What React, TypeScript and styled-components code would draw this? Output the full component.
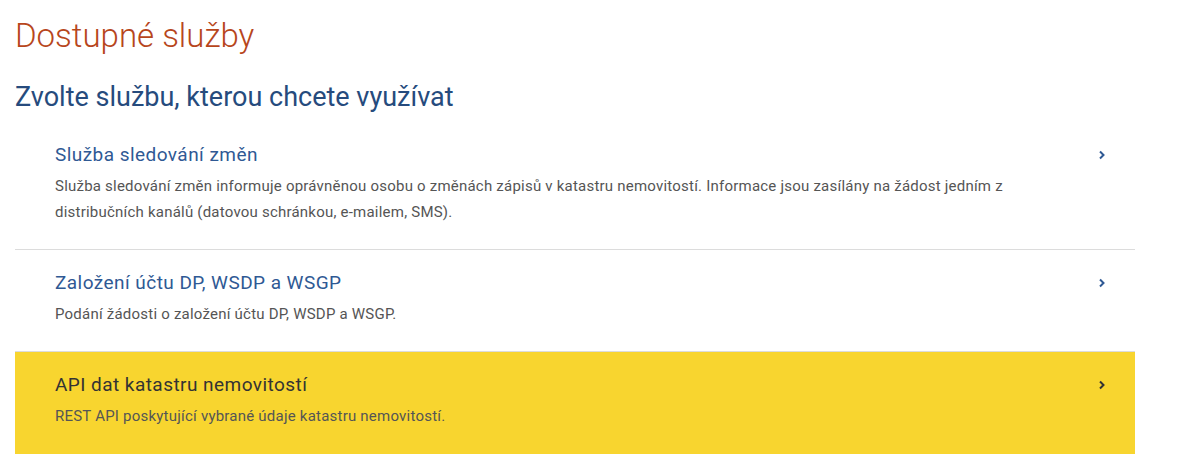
import styled, { createGlobalStyle } from "styled-components";

const GlobalStyle = createGlobalStyle`
  body {
    margin: 0;
    background: #ffffff;
    font-family: Roboto, "Liberation Sans", sans-serif;
  }
`;

const Page = styled.div`
  padding: 14px 15px 0 15px;
  width: 1120px;
`;

const Title = styled.h1`
  margin: 0;
  font-size: 33px;
  line-height: 44px;
  font-weight: 300;
  color: #b7461c;
`;

const Subtitle = styled.h2`
  margin: 23px 0 0 0;
  font-size: 27px;
  line-height: 32px;
  font-weight: 400;
  color: #264b7d;
`;

const List = styled.div`
  margin-top: 9px;
  display: flex;
  flex-direction: column;
`;

const Row = styled.a<{ $active?: boolean }>`
  display: flex;
  align-items: flex-start;
  justify-content: space-between;
  padding: 21px 29px 24px 40px;
  text-decoration: none;
  background: ${(p) => (p.$active ? "#f8d52f" : "transparent")};
  border-bottom: 1px solid ${(p) => (p.$active ? "transparent" : "#dcdcdc")};
  cursor: pointer;
`;

const Body = styled.div`
  width: 1020px;
`;

const RowTitle = styled.div<{ $active?: boolean }>`
  font-size: 19px;
  line-height: 24px;
  letter-spacing: 0.45px;
  color: ${(p) => (p.$active ? "#333333" : "#2f5994")};
`;

const RowText = styled.p`
  margin: 6px 0 0 0;
  font-size: 15px;
  line-height: 26px;
  letter-spacing: 0.22px;
  color: #555555;
`;

const Chevron = styled.svg<{ $active?: boolean }>`
  margin-top: 7px;
  width: 8px;
  height: 10px;
  color: ${(p) => (p.$active ? "#333333" : "#2f5994")};
`;

const Arrow = ({ active }: { active?: boolean }) => (
  <Chevron $active={active} viewBox="0 0 8 10">
    <path d="M2 1.5 L5.5 5 L2 8.5" fill="none" stroke="currentColor" strokeWidth="2" />
  </Chevron>
);

const services = [
  {
    title: "Služba sledování změn",
    text: "Služba sledování změn informuje oprávněnou osobu o změnách zápisů v katastru nemovitostí. Informace jsou zasílány na žádost jedním z distribučních kanálů (datovou schránkou, e-mailem, SMS).",
  },
  {
    title: "Založení účtu DP, WSDP a WSGP",
    text: "Podání žádosti o založení účtu DP, WSDP a WSGP.",
  },
  {
    title: "API dat katastru nemovitostí",
    text: "REST API poskytující vybrané údaje katastru nemovitostí.",
    active: true,
  },
];

export default function App() {
  return (
    <>
      <GlobalStyle />
      <Page>
        <Title>Dostupné služby</Title>
        <Subtitle>Zvolte službu, kterou chcete využívat</Subtitle>
        <List>
          {services.map((s) => (
            <Row key={s.title} $active={s.active}>
              <Body>
                <RowTitle $active={s.active}>{s.title}</RowTitle>
                <RowText>{s.text}</RowText>
              </Body>
              <Arrow active={s.active} />
            </Row>
          ))}
        </List>
      </Page>
    </>
  );
}
